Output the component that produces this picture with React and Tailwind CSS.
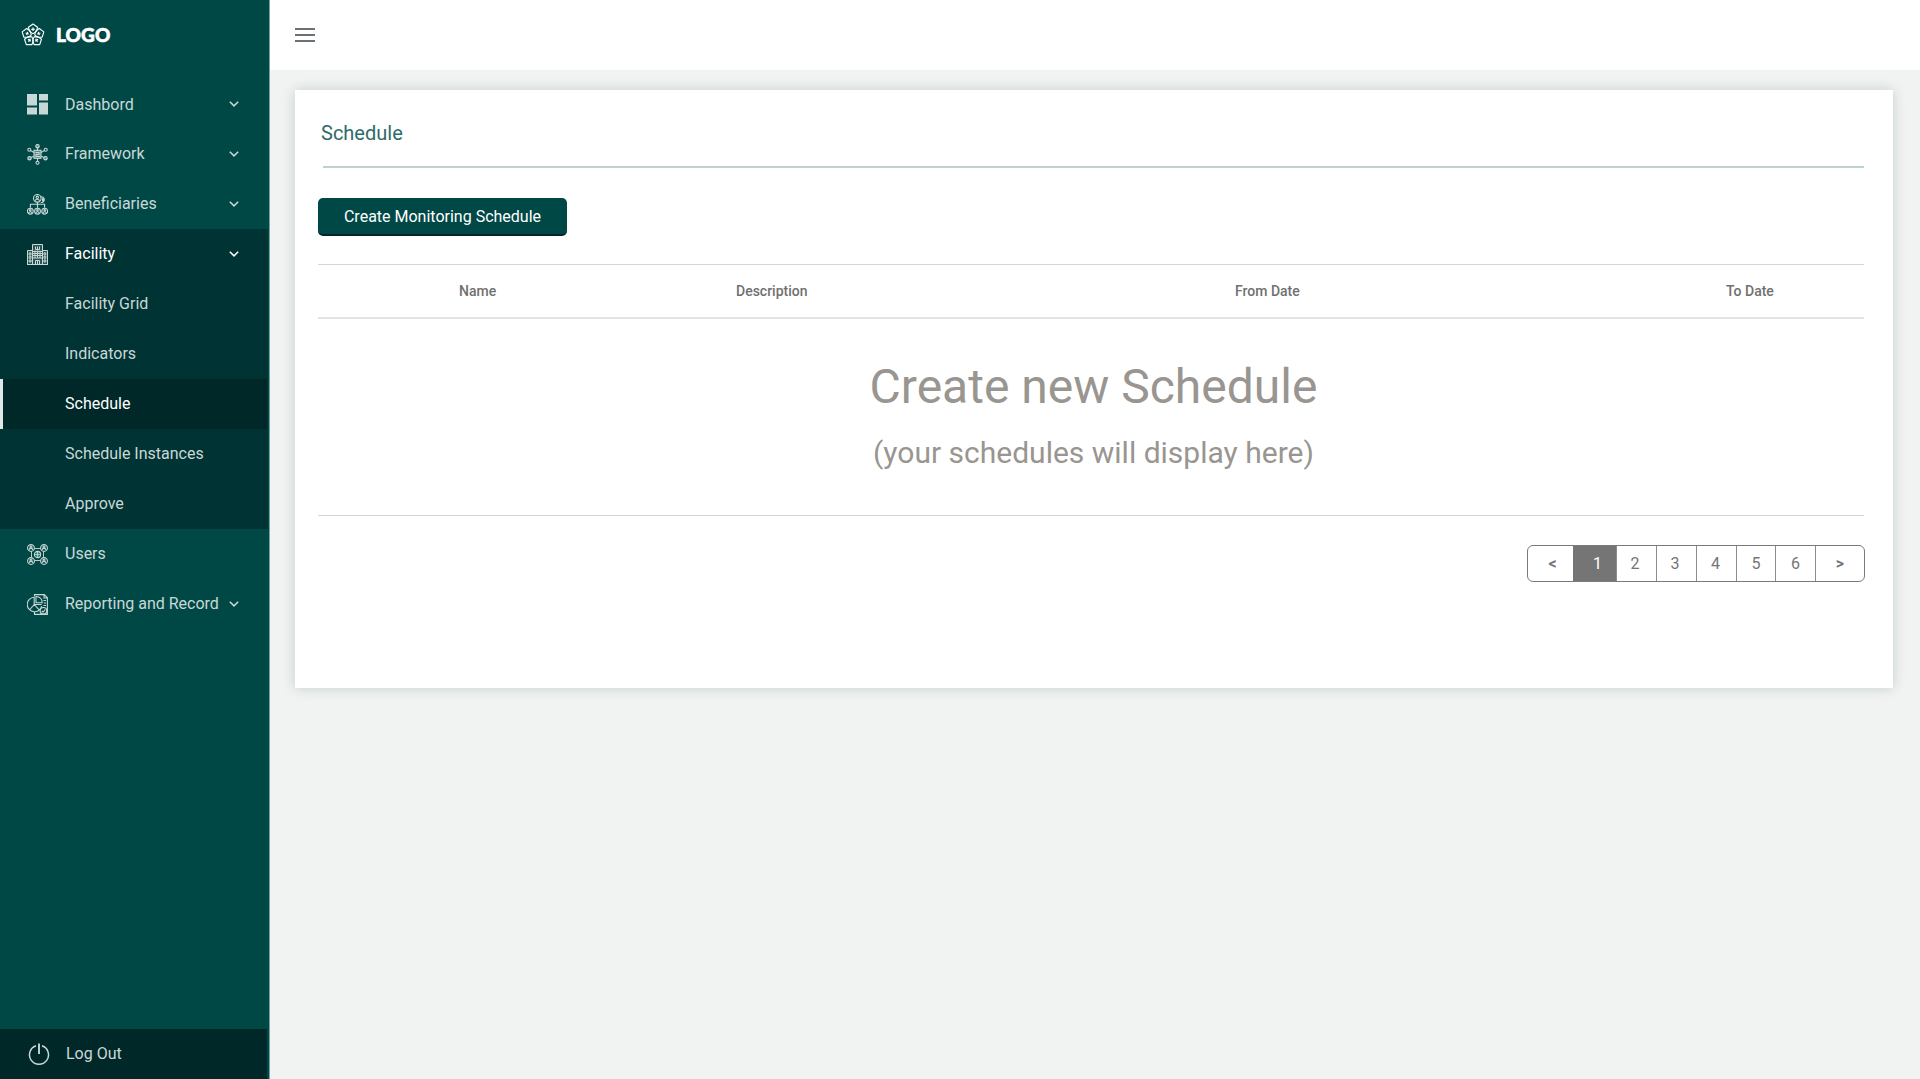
const icon = "block h-[21px] w-[21px] shrink-0";

function LogoMark() {
  const petals = [0, 72, 144, 216, 288];
  return (
    <svg className="block h-6 w-6" viewBox="0 0 24 24" fill="none" stroke="#fff" strokeWidth="1.1" strokeLinejoin="round">
      {petals.map((a) => (
        <g key={a} transform={`rotate(${a} 12 12.4)`}>
          <path d="M12 1 16.600 4.300 15.200 8.600 12 10.600 8.800 8.600 7.400 4.300Z" />
          <path d="M12 4.600V8M10.300 6.300H13.700" strokeWidth="1.200" />
        </g>
      ))}
    </svg>
  );
}

function DashboardIcon() {
  return (
    <svg className={icon} viewBox="0 0 21 21" fill="currentColor">
      <path d="M0 0h10v11.500H0zM12 0h9v6.500h-9zM0 13.500h10V20.500H0zM12 8.500h9v12h-9z" />
    </svg>
  );
}

function FrameworkIcon() {
  return (
    <svg className={icon} viewBox="0 0 21 21" fill="none" stroke="currentColor" strokeWidth="1.1">
      <circle cx="10.500" cy="2.200" r="1.700" fill="currentColor" fillOpacity=".5" />
      <circle cx="10.500" cy="18.700" r="1.500" />
      <circle cx="2.300" cy="5.800" r="1.500" />
      <circle cx="18.700" cy="5.800" r="1.500" />
      <circle cx="2.500" cy="14.200" r="1.700" fill="currentColor" fillOpacity=".5" />
      <circle cx="18.500" cy="14.200" r="1.700" fill="currentColor" fillOpacity=".5" />
      <path d="M10.500 3.800v3M10.500 14v3.200M3.600 6.600 7 8.400M17.400 6.600 14 8.400M4 13.400l3-1.200M17 13.400l-3-1.200" />
      <rect x="7" y="6.300" width="7" height="8" fill="currentColor" fillOpacity=".45" />
      <path d="M8.500 8.500h3.500v2H9v2h4" />
    </svg>
  );
}

function BeneficiariesIcon() {
  return (
    <svg className={icon} viewBox="0 0 21 21" fill="none" stroke="currentColor" strokeWidth="1.100">
      <circle cx="10.300" cy="4.300" r="3.800" />
      <circle cx="10.300" cy="3.300" r="1.200" />
      <path d="M8 6.800c.5-2 4-2 4.600 0M13.500 2.900a2.900 2.900 0 1 1 .3 5.600" />
      <path d="M15.500 4.200v3.200M16.600 4.600v2.500" />
      <path d="M10.500 8.100v5.600M3.400 13.700v-3.400h14.200v3.400" />
      {[3.3, 10.5, 17.7].map((x) => (
        <g key={x}>
          <circle cx={x} cy="17.200" r="2.900" />
          <circle cx={x} cy="16.300" r=".8" />
          <path d={`M${x - 1.6} 19c.3-1.600 2.900-1.600 3.200 0`} />
        </g>
      ))}
    </svg>
  );
}

function FacilityIcon() {
  return (
    <svg className={icon} viewBox="0 0 21 21" fill="none" stroke="currentColor" strokeWidth="1">
      <g className="text-[#c8d8d7]">
        <path d="M.5 6.500h5v14h-5zM15.500 6.500h5v14h-5zM5.500.5h10v20h-10z" fill="currentColor" fillOpacity=".2" />
        <path d="M8.500 2.500v3h4v-3M10.500 2.500v3M8 6.500v7.500M10.500 6.500v7.500M13 6.500v7.500M5.500 7.500h10M5.500 9.500h10M5.500 11.500h10M5.500 14h10M0 20.500h21" />
        <path d="M2.200 8.800h1.800v2.200H2.200zM2.200 12.300h1.800v2H2.200zM2.200 16h1.800v2H2.200zM17 8.800h1.800v2.200H17zM17 12.300h1.800v2H17zM17 16h1.800v2H17zM8.500 20v-3.500h4V20M10.500 16v4" />
      </g>
    </svg>
  );
}

function UsersIcon() {
  return (
    <svg className={icon} viewBox="0 0 21 21" fill="none" stroke="currentColor" strokeWidth="1.1">
      {[[4, 4], [17, 4], [4, 17], [17, 17]].map(([x, y]) => (
        <g key={`${x}-${y}`} transform={`translate(${x} ${y})`}>
          <circle r="3.400" />
          <circle cy="-.9" r="1" />
          <path d="M-2 2.200c.3-2.500 3.700-2.500 4 0" />
        </g>
      ))}
      <path d="M7.500 4.500h6M7.500 16.500h6M4.500 7.500v6M16.500 7.500v6" strokeWidth=".9" />
      <circle cx="10.500" cy="10.500" r="3.100" />
      <path d="M7.500 10.500h6M10.500 7.500v6M8.600 9h3.800M8.600 12h3.800" strokeWidth=".8" />
    </svg>
  );
}

function ReportIcon() {
  return (
    <svg className={icon} viewBox="0 0 21 21" fill="none" stroke="currentColor" strokeWidth="1.100">
      <path d="M7.500 2.500V.6h9.800l3.100 3.200v16.600H7.500V18M17 .6v3.400h3.400" />
      <path d="M7.200 3.200a7.300 7.300 0 1 0 7.500 8.800M7.200 3.200V10.500L2.400 16M7.200 10.500H14.700M7.200 10.500l4.800 5.200" />
      <path d="M9 2.500v6.300h6.200c0-3.800-2.400-6.100-6.200-6.300z" />
      <path d="M16.500 6.500h2.500M16.800 9h2.200M16.500 11.500H19" />
      <circle cx="16.400" cy="16.800" r="3.300" />
      <path d="m14.700 16.900 1.300 1.300 2.200-2.700" />
    </svg>
  );
}

function PowerIcon() {
  return (
    <svg className="block h-[23px] w-[22px] shrink-0" viewBox="0 0 22 23" fill="none" stroke="currentColor" strokeWidth="1.500">
      <path d="M8 2.800A9.500 9.500 0 1 0 14 2.800" />
      <path d="M11 .5v10.500" strokeWidth="1.900" />
    </svg>
  );
}

function Chevron() {
  return (
    <svg className="ml-auto block h-[6px] w-[10px] shrink-0" viewBox="0 0 10 6" fill="none" stroke="currentColor" strokeWidth="1.500">
      <path d="M.8.7 5 4.900 9.200.7" />
    </svg>
  );
}

const items = [
  { label: "Dashbord", Icon: DashboardIcon, arrow: true },
  { label: "Framework", Icon: FrameworkIcon, arrow: true },
  { label: "Beneficiaries", Icon: BeneficiariesIcon, arrow: true },
  {
    label: "Facility",
    Icon: FacilityIcon,
    arrow: true,
    open: true,
    children: ["Facility Grid", "Indicators", "Schedule", "Schedule Instances", "Approve"],
  },
  { label: "Users", Icon: UsersIcon },
  { label: "Reporting and Record", Icon: ReportIcon, arrow: true },
];

function NavItem({ label, Icon, arrow, open, children }) {
  return (
    <li className={open ? "mr-px bg-[#003334]" : "mr-px"}>
      <div className={`flex h-[50px] items-center pr-[29px] pl-[27px] ${open ? "text-white" : "text-[#c8d8d7]"}`}>
        <Icon />
        <span className={label === "Dashbord" ? "ml-[17px] pt-px whitespace-nowrap" : "ml-[17px] whitespace-nowrap"}>{label}</span>
        {arrow && <Chevron />}
      </div>
      {children && (
        <ul>
          {children.map((c) => (
            <li
              key={c}
              className={
                c === "Schedule"
                  ? "mr-px flex h-[50px] items-center border-l-[3px] border-[#dfe8e7] bg-[#002828] pl-[62px] text-white"
                  : "flex h-[50px] items-center pl-[65px] text-[#c8d8d7]"
              }
            >
              {c}
            </li>
          ))}
        </ul>
      )}
    </li>
  );
}

function Sidebar() {
  return (
    <aside className="flex w-[270px] shrink-0 flex-col border-r border-[#74a09e] bg-[#004846] text-[16px]">
      <div className="flex h-[79px] items-start pt-[23px] pl-[21px]">
        <LogoMark />
        <span className="ml-[11px] font-[Lato] text-[19px] leading-[23px] font-black tracking-[0.1px] text-white [-webkit-text-stroke:0.6px_white]">
          LOGO
        </span>
      </div>
      <ul>
        {items.map((i) => (
          <NavItem key={i.label} {...i} />
        ))}
      </ul>
      <div className="mt-auto mr-[2px] flex h-[50px] items-center bg-[#002828] pl-7 text-[#c8d8d7]">
        <PowerIcon />
        <span className="ml-4">Log Out</span>
      </div>
    </aside>
  );
}

function Pagination() {
  const cell = "flex items-center justify-center border-r border-[#8c8c8c]";
  return (
    <div className="mr-[-1px] ml-auto flex h-[37px] w-[338px] overflow-hidden rounded-[6px] border border-[#7a7a7a] text-[16px] text-[#757575]">
      <div className="flex w-[45px] items-center justify-center pl-1 font-bold">&lt;</div>
      <div className="flex w-[43px] items-center justify-center bg-[#757575] pl-[6px] text-white">1</div>
      <div className={`${cell} w-[41px] border-l pr-[3px]`}>2</div>
      <div className={`${cell} w-10 pr-[3px]`}>3</div>
      <div className={`${cell} w-10 pr-[2px]`}>4</div>
      <div className={`${cell} w-[39px]`}>5</div>
      <div className={`${cell} w-10`}>6</div>
      <div className="flex flex-1 items-center justify-center font-bold">&gt;</div>
    </div>
  );
}

export default function App() {
  return (
    <div className="flex h-[1079px] w-[1920px] overflow-hidden bg-[#f0f3f2] font-[Roboto,sans-serif]">
      <Sidebar />
      <div className="flex flex-1 flex-col">
        <header className="flex h-[70px] items-center bg-white pl-[25px]">
          <div className="flex flex-col gap-1">
            <div className="h-[2px] w-5 bg-[#6b7174]" />
            <div className="h-[2px] w-5 bg-[#6b7174]" />
            <div className="h-[2px] w-5 bg-[#6b7174]" />
          </div>
        </header>
        <main className="mt-5 ml-[25px] h-[598px] w-[1598px] bg-white pr-[29px] pl-[23px] shadow-[0_0_12px_rgba(0,40,40,0.18)]">
          <h1 className="h-[76px] pt-[31px] pl-[3px] text-[20px] leading-6 text-[#2f6b69]">Schedule</h1>
          <div className="ml-[5px] h-[2px] bg-[#bfd2d1]" />
          <button className="mt-[30px] block h-[38px] w-[249px] rounded-[5px] border-b-2 border-[#002828] bg-[#004846] pt-px text-[16px] text-white">
            Create Monitoring Schedule
          </button>
          <div className="mt-7 grid h-[55px] grid-cols-[141px_277px_499px_491px_138px] items-center border-t border-b-2 border-t-[#d4d4d4] border-b-[#e4e4e4] pt-px text-[14px] font-medium text-[#707070]">
            <span />
            <span>Name</span>
            <span>Description</span>
            <span>From Date</span>
            <span>To Date</span>
          </div>
          <section className="flex h-[197px] flex-col items-center border-b border-[#d4d4d4] pt-10 pl-[5px] text-[#999590]">
            <h2 className="text-[48px] leading-[56px]">Create new Schedule</h2>
            <p className="mt-[20px] text-[30px] leading-9">(your schedules will display here)</p>
          </section>
          <div className="h-[29px]" />
          <Pagination />
        </main>
      </div>
    </div>
  );
}
